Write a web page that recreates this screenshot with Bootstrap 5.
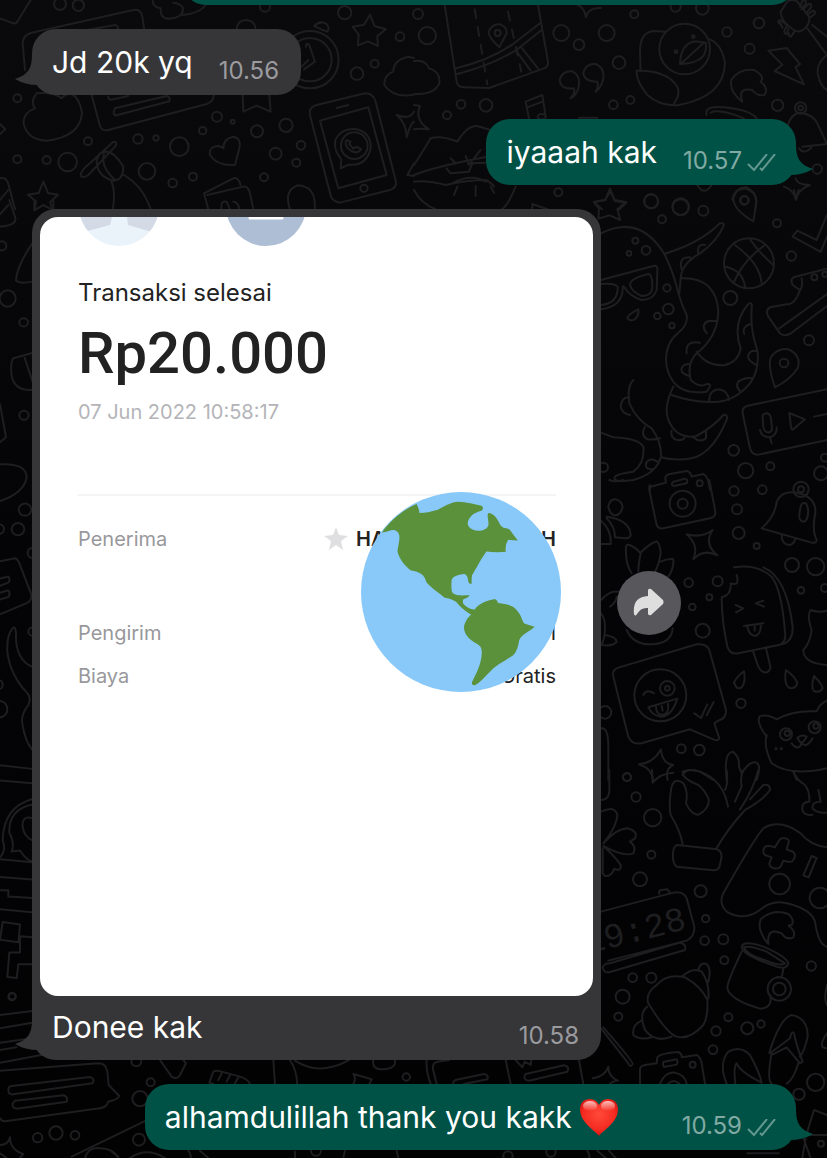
<!DOCTYPE html>
<html lang="id">
<head>
<meta charset="utf-8">
<meta name="viewport" content="width=device-width, initial-scale=1">
<title>Chat</title>
<link href="https://cdn.jsdelivr.net/npm/bootstrap@5.3.0/dist/css/bootstrap.min.css" rel="stylesheet">
<style>
body{background:#050507;font-family:Inter,"Liberation Sans",sans-serif}
.chat{min-height:100vh;padding:0 31px 8px 32px;gap:24px;background:linear-gradient(#0a0a0c,#040406 50%,#020203)}
.wallpaper{z-index:0;pointer-events:none}
.wallpaper g{fill:none;stroke:#1e1e20;stroke-width:2;stroke-linecap:round;stroke-linejoin:round}
.wallpaper g *{vector-effect:non-scaling-stroke}
.wallpaper .digits{fill:#1e1e20;stroke:none;font-family:"Liberation Mono",monospace}
.bubble{border-radius:24px;min-height:66px;padding:11px 20px 0;color:#fff;font-size:30px;line-height:44px}
.bubble-in{background:#363638;padding-right:22px}
.bubble-out{background:#005246}
.cut{height:5px;margin-bottom:0}
.cut .bubble{width:614px}
.stamp{font-size:24px;line-height:28px;color:#9b9b9f;padding-top:17px;margin-left:26px}
.bubble-out .stamp{color:#80aaa3}
.after-heart{margin-left:64px}
.tail{bottom:4px}
.bubble-in .tail{left:-18px}
.bubble-out .tail{right:-18px}
.photo-bubble{width:569px;padding:8px}
.photo{background:#fff;border-radius:18px;height:779px;color:#222;padding:0 37px 0 38px;line-height:30px}
.status{font-size:24px;margin-top:32px}
.amount{font:500 58px/72px Roboto,sans-serif;margin-top:9px}
.date{font-size:20px;color:#b4b4b8;margin-top:8px}
.rule{border-top:2px solid #f4f4f4;margin-top:67px}
.details{font-size:20px;margin-top:28px}
.details th{font-weight:400;color:#98989c}
.details td,.details th{padding:0;vertical-align:top}
.tall-row{height:94px}
.short-row{height:43px}
.masked{width:200px;font-weight:600}
.globe{left:321px;top:275px}
.caption-row{padding:9px 14px 0 12px;height:56px}
.forward{width:64px;height:64px;background:#58585c;margin-bottom:64px}
</style>
</head>
<body>
<main class="chat position-relative d-flex flex-column overflow-hidden">
<svg class="wallpaper position-absolute top-0 start-0 w-100 h-100" viewBox="0 0 827 1158" preserveAspectRatio="xMidYMin slice" aria-hidden="true">
<!-- top left -->
<g transform="scale(.3333)">
<path d="M0 55 40 70Q50 72 55 60L92 0M75 210 68 130Q68 105 95 98L400 30Q422 25 427 50L433 90M180 105 345 75Q356 76 354 90M458 0Q458 22 482 25Q480 55 505 56Q555 52 548 22Q540 10 520 8M548 45Q600 40 620 12M710 88Q712 60 740 60Q765 62 767 88M943 78Q960 60 980 72Q990 85 982 95Q960 88 943 78M275 285 300 378Q306 394 325 390L620 312Q642 304 641 285M325 290Q325 302 340 298L385 288M345 325 500 288Q512 290 508 304L350 346Q335 345 345 325M110 280Q90 305 105 325Q65 340 72 375Q85 420 140 422Q240 410 246 340Q240 295 215 282Q195 280 185 295Q160 275 110 280"/>
<path d="m1110 44 14 34 34 10-26 20 2 30-30-14-30 12 2-32-18-24 34-6zM728 285l2 50 40-18 42 18-4-50M1242 284Q1180 295 1153 255Q1152 225 1180 215Q1180 180 1225 170L1242 174M1242 335Q1230 360 1190 345Q1220 370 1220 412Q1232 370 1242 365M0 372 16 388 0 402"/>
<circle cx="930" cy="179" r="86"/><circle cx="930" cy="179" r="65"/><path d="M918 140Q918 125 928 135L945 185 912 208M925 180 905 200"/>
<path d="M930 345Q925 322 950 315L1095 280Q1120 280 1127 305L1188 545Q1190 565 1170 570L1020 608Q1000 606 993 590zM960 362 1105 322 1160 525 1015 565zM1010 324 1045 315"/>
<circle cx="1092" cy="565" r="11"/><circle cx="1063" cy="437" r="40"/><path d="M1022 505 1024 478Q1000 450 1006 420Q1025 382 1070 388Q1115 400 1112 445Q1100 500 1045 494zM1040 420Q1030 435 1050 450Q1070 465 1084 448L1070 440 1060 446 1048 432 1052 425z"/>
<path d="M705 495Q650 498 630 465Q625 440 655 438Q665 440 670 445Q670 415 700 410Q725 415 718 445zM340 425Q355 425 345 440L265 525Q240 540 243 520Q250 505 270 490zM300 460Q335 440 370 500Q370 540 340 542Q290 530 290 480zM312 462Q300 500 345 540M335 545Q348 580 338 628M372 525Q430 560 452 628M130 545l14 34 30 5-24 22 8 24M130 545l-14 34-32 5 24 20-4 26M0 535Q20 530 26 555L45 628M0 600 25 570M625 628 612 580 700 535Q715 530 722 555M622 585 730 560Q745 558 750 580L760 628M870 628Q850 570 895 556Q950 560 944 628M665 628Q660 600 680 605L690 628M700 605Q715 605 718 628M1242 490 1222 525 1242 528"/>
<circle cx="180" cy="12" r="18"/><circle cx="235" cy="16" r="17"/><circle cx="795" cy="20" r="15"/><circle cx="1034" cy="38" r="20"/><circle cx="1200" cy="110" r="13"/><circle cx="1124" cy="191" r="12"/><circle cx="1071" cy="221" r="19"/><circle cx="52" cy="295" r="12"/><circle cx="651" cy="350" r="15"/><circle cx="698" cy="365" r="6"/><circle cx="608" cy="392" r="11"/><circle cx="771" cy="394" r="18"/><circle cx="858" cy="376" r="20"/><circle cx="827" cy="461" r="18"/><circle cx="903" cy="436" r="13"/><circle cx="889" cy="488" r="12"/><circle cx="792" cy="532" r="12"/><circle cx="264" cy="424" r="12"/><circle cx="414" cy="417" r="14"/><circle cx="468" cy="414" r="8"/><circle cx="538" cy="440" r="28"/><circle cx="441" cy="514" r="25"/><circle cx="518" cy="549" r="13"/><circle cx="579" cy="530" r="12"/><circle cx="203" cy="486" r="28"/><circle cx="140" cy="480" r="12"/><circle cx="52" cy="478" r="12"/>
</g>
<!-- top right -->
<g transform="translate(414 0) scale(.3333)">
<path d="M92 15 128 245Q132 262 150 262L225 264 390 205Q404 200 402 185L372 15M126 205Q230 180 300 130L378 70M130 222Q235 195 310 148L380 92M305 150 350 212M320 140 372 205M256 142Q222 110 224 95Q235 70 258 73Q280 80 278 100zM490 15Q510 20 516 52Q522 22 560 24"/><path d="m182 28 38 225M282 35l40 180" stroke-dasharray="9 9"/><circle cx="251" cy="99" r="9"/>
<path d="M0 183Q35 178 45 205Q80 215 76 250Q60 285 0 282M470 295Q485 280 480 265Q440 270 437 240Q445 212 475 214Q500 225 494 260Q490 285 470 295zM545 275Q555 260 550 245Q510 245 508 218Q515 190 545 192Q575 205 567 240Q560 265 545 275zM680 212 678 150Q680 95 720 93L755 95M668 212Q665 240 700 285Q740 320 795 315Q930 290 933 190Q925 135 888 118M668 212Q760 210 790 260Q800 285 780 310M798 192Q800 130 845 124L875 128Q885 190 798 192M800 192 868 130"/>
<circle cx="812" cy="147" r="76"/><circle cx="838" cy="110" r="4"/><circle cx="786" cy="155" r="4"/>
<path d="M1063 152 1118 144 1158 192 1145 202 1170 253 1082 213 1105 194zM985 305Q945 275 952 240Q975 205 1020 210Q1055 230 1040 245Q1065 265 1052 285Q1030 290 1015 270Q970 260 985 305zM1100 35 1120 5Q1135-5 1150 5L1185 50Q1190 70 1170 88Q1155 100 1140 90Q1100 65 1100 35M1158 20l8-18q10-8 10 8l-14 18m6 0 16-16q12-2 6 12l-14 16m6 2 16-10q10 2 2 12l-14 10M1105 80l-12-14q0-8 10-4l16 14m-14 8-6-16m24 18-4 16q-8 2-8-10l8-14m24 14-12 18q-8-2-6-10M1180 85 1235 160M1195 75 1239 110M1239 165Q1205 190 1212 225Q1220 260 1239 270M345 355 335 305 385 285 395 350M340 322 388 304M878 345Q870 315 930 322Q1010 330 1028 355M890 338Q915 325 990 355M495 353 550 353"/>
<ellipse cx="383" cy="350" rx="12" ry="8"/>
<path d="M0 315 18 318M18 318Q0 360 45 388Q15 385 0 388M0 495Q20 465 50 415Q80 405 130 425Q160 375 190 378L230 390M0 525Q60 500 220 470M97 505 110 520 165 515 175 490 215 488M110 475 125 490M155 468 165 495 200 450M0 545Q40 540 95 555Q160 540 215 540Q235 550 240 560M0 570Q20 610 65 628M305 560Q285 610 265 628M130 560 120 585M185 558 185 588M230 560 240 578M115 550Q170 520 215 545"/>
<path d="m588 566 14 34 34 6-26 22M588 566l-14 34-34 6 24 22M355 628V612l45 16M850 555Q870 590 893 555M955 600Q960 566 992 566Q1030 575 1026 610L1024 628M1145 535Q1150 555 1188 555Q1150 570 1146 600Q1140 570 1110 560M1120 380Q1130 340 1160 338Q1200 345 1210 370L1239 432M1165 440 1239 432M1155 445Q1170 465 1192 443"/>
<circle cx="12" cy="42" r="15"/><circle cx="40" cy="107" r="26"/><circle cx="442" cy="99" r="24"/><circle cx="495" cy="134" r="16"/><circle cx="578" cy="99" r="24"/><circle cx="615" cy="188" r="19"/><circle cx="661" cy="43" r="12"/><circle cx="785" cy="20" r="15"/><circle cx="865" cy="25" r="19"/><circle cx="939" cy="96" r="14"/><circle cx="1035" cy="69" r="16"/><circle cx="1007" cy="146" r="15"/><circle cx="598" cy="314" r="13"/><circle cx="649" cy="300" r="12"/><circle cx="216" cy="316" r="19"/><circle cx="141" cy="313" r="13"/><circle cx="99" cy="346" r="12"/><circle cx="1091" cy="316" r="17"/><circle cx="1160" cy="324" r="17"/><circle cx="1160" cy="324" r="7"/><circle cx="1210" cy="507" r="14"/><circle cx="433" cy="577" r="12"/><circle cx="711" cy="604" r="21"/><circle cx="800" cy="622" r="24"/><circle cx="992" cy="601" r="12"/>
</g>
<!-- right, octopus and ball -->
<g transform="translate(590 190) scale(.3333)">
<path d="m61 5 14 28 34 5-26 24 8 28-32-14-34 10 2-30-16-20 34-6zM490 94Q430 60 430 25Q440-10 470-8Q505 10 498 45zM612 0 618 28 626 0M622 122 680 150 711 75M622 122 608 140 692 186 711 140M33 130Q150 70 225 195Q255 260 265 310Q275 345 290 375Q295 405 265 428Q220 465 230 530Q250 620 350 605Q370 580 350 582Q330 595 302 570Q290 520 320 490Q385 440 385 360Q375 260 272 265M222 192Q330 160 390 100Q405 98 400 110Q380 155 330 190Q275 220 272 265L268 310M320 485Q350 530 405 525Q445 515 452 475Q425 400 475 342Q488 335 485 355Q480 420 502 480Q510 540 480 580Q430 640 360 636Q300 635 245 615M250 590Q220 650 235 690Q260 750 320 738Q370 710 400 675Q415 672 410 690Q360 810 280 808Q240 810 215 802M130 570Q110 590 118 640Q140 690 185 715Q215 755 213 800Q200 850 130 870Q65 880 75 860Q85 850 130 845Q165 820 160 770Q145 745 70 742L33 728"/>
<path d="M33 270 190 228Q203 225 202 240L200 300Q190 330 155 330Q120 320 103 292Q98 285 98 295Q98 350 33 358M33 282Q75 278 83 290Q85 340 33 345M120 285Q120 265 175 252Q190 255 186 300Q180 318 155 318Q125 305 120 285M112 385Q115 372 145 358Q148 375 135 388Q118 395 112 385M275 238Q265 200 300 202L304 210M325 190Q320 160 345 165M350 430Q330 405 355 393L382 393M290 490Q285 450 330 458M298 558Q270 550 275 535Q280 522 298 522M463 432Q455 410 480 403M500 525Q470 510 475 495Q480 480 500 483M452 605Q435 590 445 575Q465 560 488 565M358 634Q355 600 390 598Q415 605 416 630M120 675Q95 670 92 650Q95 620 118 622M165 710Q150 735 172 748Q195 750 210 745M245 722Q240 745 262 750Q280 752 284 742M310 742Q330 760 348 745V725M185 837Q165 840 168 820Q180 800 202 815"/>
<circle cx="477" cy="220" r="75"/><path d="M435 165Q510 220 515 278M480 147Q500 180 550 225M430 280Q460 210 525 165M405 230Q460 240 465 292"/>
<path d="M711 236 610 262Q600 270 608 285L630 300Q640 290 635 265M630 300Q615 345 590 343L540 352Q525 360 535 380L570 430Q580 440 600 432L711 348M568 415 711 312M555 592Q530 520 545 498Q570 470 600 480Q635 500 623 535Q600 570 555 592M711 598 470 648Q455 655 458 670L480 775Q485 795 505 794L711 750M518 680Q515 672 530 670Q540 670 543 685L546 715Q545 728 532 727Q522 725 520 710zM510 720Q515 742 540 742Q562 735 560 712M540 742 545 760M598 670Q595 668 605 672L645 688 610 718Q605 722 603 710zM672 680 711 672M180 900Q180 888 190 888L228 878 226 865Q225 855 240 852L290 843Q300 843 305 860L340 852Q355 858 360 900M248 876 285 866Q295 868 290 880L252 888Q242 888 248 876"/>
<circle cx="184" cy="34" r="21"/><circle cx="272" cy="50" r="25"/><circle cx="340" cy="62" r="15"/><circle cx="216" cy="88" r="12"/><circle cx="463" cy="31" r="13"/><circle cx="561" cy="100" r="12"/><circle cx="604" cy="198" r="14"/><circle cx="136" cy="152" r="9"/><circle cx="168" cy="181" r="13"/><circle cx="117" cy="190" r="7"/><circle cx="231" cy="294" r="11"/><circle cx="235" cy="357" r="16"/><circle cx="202" cy="378" r="10"/><circle cx="246" cy="407" r="8"/><circle cx="421" cy="324" r="21"/><circle cx="657" cy="451" r="15"/><circle cx="582" cy="519" r="13"/><circle cx="673" cy="262" r="9"/><circle cx="705" cy="253" r="8"/><circle cx="431" cy="781" r="16"/><circle cx="467" cy="842" r="23"/><circle cx="541" cy="829" r="12"/><circle cx="693" cy="850" r="21"/><circle cx="705" cy="803" r="12"/><circle cx="329" cy="880" r="9"/><circle cx="40" cy="832" r="14"/>
</g>
<!-- right, camera to pug -->
<g transform="translate(590 480) scale(.3333)">
<path d="M180 15Q175 20 180 40L200 135Q205 147 220 145L360 115Q378 110 376 95L358 0M515 145Q555 110 560 65Q575 30 620 38Q680 50 676 100Q665 150 680 180Q680 190 665 188zM632 80Q635 65 648 70Q660 90 650 118Q640 132 630 118Q625 110 632 80M575 165Q575 195 600 195Q615 190 615 175M55 80Q60 55 78 58Q100 65 97 85Q88 110 70 105Q58 98 55 80M50 110Q120 120 122 165Q120 175 105 175L75 172Q75 140 50 115M33 122Q65 150 62 192H33M125 280Q105 250 108 200Q110 190 125 198Q140 205 152 220Q145 255 145 275M152 218Q180 190 200 184Q210 190 212 220Q205 260 195 275M212 245Q235 235 250 238Q252 265 235 290M110 450Q130 495 185 493Q245 490 248 445M33 360Q60 330 85 335M60 380Q80 365 80 350M33 400Q45 415 45 440Q45 480 33 495M45 465Q78 470 80 485Q70 500 33 495"/>
<circle cx="278" cy="71" r="39"/><circle cx="278" cy="71" r="15"/><path d="M290 163Q335 175 368 150Q340 190 382 226Q340 205 310 238Q328 195 290 163"/>
<path d="M432 262Q500 250 545 290Q575 330 585 455Q590 485 570 494L445 520Q420 525 412 500Q395 420 395 352Q425 345 422 310Q450 320 440 285M520 262Q590 290 608 440Q610 485 575 493M490 516 505 560Q515 580 530 577Q545 570 540 555L528 505M437 375 460 385 438 397M520 362 497 370 522 380M462 438 520 430M472 438Q475 465 495 468Q515 462 512 432M494 435V452M711 392Q690 400 662 390Q650 405 665 450Q660 490 640 510Q640 550 711 555M432 608Q440 590 462 574Q468 605 455 622Q440 632 432 608M588 570Q615 590 622 608Q620 625 600 625Q580 615 588 570M672 588Q695 610 698 625Q690 640 672 633Q662 625 672 588"/>
<path d="M70 590Q65 570 85 563L320 493Q350 490 358 510L408 690Q410 715 385 722L373 730 388 775Q385 785 370 778L300 748 155 790Q125 795 115 770zM160 645Q170 625 192 640M175 682 262 656Q245 710 212 710Q185 705 175 682M198 680Q198 705 220 704Q238 700 234 672M215 678 218 692M313 700 333 714 352 673M350 706 371 666"/>
<circle cx="211" cy="646" r="78"/><circle cx="232" cy="625" r="22"/><circle cx="232" cy="625" r="7"/>
<path d="M530 770Q500 730 508 710Q530 700 560 718Q610 690 680 694Q690 670 711 662M530 765Q520 800 545 850Q600 890 711 865M605 790Q625 815 635 790Q650 805 668 775M622 774Q635 762 650 770Q640 788 632 788zM610 875 620 900M147 853Q190 850 213 808Q215 850 250 855Q225 865 233 900M147 853Q185 865 190 900M278 885Q290 862 330 875L370 900M410 900Q400 820 428 815Q450 830 447 860L455 880Q480 840 500 848Q515 860 500 900M33 745Q55 740 55 800V900M58 0Q75 8 100 0"/>
<circle cx="588" cy="763" r="18"/><circle cx="592" cy="760" r="8"/><circle cx="674" cy="742" r="18"/><circle cx="678" cy="738" r="8"/><circle cx="558" cy="806" r="2"/><circle cx="574" cy="806" r="2"/>
<circle cx="432" cy="33" r="14"/><circle cx="517" cy="29" r="13"/><circle cx="441" cy="88" r="15"/><circle cx="446" cy="159" r="18"/><circle cx="500" cy="198" r="9"/><circle cx="633" cy="28" r="23"/><circle cx="633" cy="28" r="9"/><circle cx="606" cy="255" r="21"/><circle cx="677" cy="260" r="26"/><circle cx="633" cy="331" r="10"/><circle cx="705" cy="324" r="12"/><circle cx="296" cy="308" r="13"/><circle cx="383" cy="304" r="15"/><circle cx="358" cy="352" r="9"/><circle cx="307" cy="381" r="10"/><circle cx="338" cy="452" r="21"/><circle cx="453" cy="670" r="14"/><circle cx="45" cy="697" r="19"/><circle cx="274" cy="806" r="13"/><circle cx="328" cy="810" r="16"/><circle cx="111" cy="891" r="12"/>
</g>
<!-- right, glove to croissant -->
<g transform="translate(590 770) scale(.3333)">
<path d="M278 222Q270 180 242 135Q235 100 245 50Q255 20 280 40Q295 65 288 100Q305 135 325 134Q355 120 357 90Q345 60 325 45Q275 25 278 5Q300-5 330 5Q400 30 414 110M410 0Q415 40 405 60M460 0Q450 20 455 50L435 95M505 0Q490 60 450 118M480 88 520 45Q540 40 540 60Q520 90 465 120Q410 180 378 238M262 225 382 238Q397 245 394 265L388 292Q382 302 370 301L260 290Q245 280 250 240Q255 225 262 225M610 5Q620 30 645 45Q660 65 658 95Q635 95 637 118Q640 138 668 134M685 60 692 95Q665 95 668 115Q680 130 711 128M186 0 188 38Q210 10 250 8M33 125Q75 105 82 135Q80 170 40 220Q80 175 115 175Q145 185 135 205L120 215Q140 230 130 250Q100 262 40 228Q80 265 92 285Q95 305 72 297Q65 320 45 318L38 310V235M33 90Q55 90 58 65V0"/>
<path d="M711 232Q660 225 632 190Q570 145 520 175Q490 210 400 370Q385 400 410 425Q460 455 510 420Q550 385 600 402Q665 420 675 455Q685 525 711 530M555 232 568 210Q575 200 590 206Q600 210 595 220L590 238 610 246Q620 255 610 270Q605 278 595 275L580 272 572 290Q560 300 545 292Q535 288 540 275L545 262 525 255Q515 245 525 230Q535 225 555 232M640 316 665 258 680 264 656 322zM535 522Q500 480 512 448Q550 415 595 432Q615 450 605 465Q590 465 600 470Q618 485 610 502Q590 512 575 490Q530 470 535 522M33 425 250 368Q280 362 290 385L313 470Q315 500 290 512L55 572M60 580 270 518Q290 522 285 540L60 606Q40 610 38 592Q42 580 60 580M208 372Q205 360 215 360L232 358 240 368"/>
<path d="M455 545Q410 640 412 655Q420 690 510 716Q540 715 542 690V680M455 530Q460 510 520 530Q590 560 595 580Q590 600 560 590Q455 555 455 530M462 532Q480 525 530 545L585 580Q570 590 530 572Q470 555 462 532M580 598 575 622H560M540 675 545 685"/><circle cx="568" cy="657" r="35"/><circle cx="568" cy="657" r="19"/>
<path d="M175 700Q165 670 200 645Q230 610 285 622Q335 650 352 690Q355 740 340 765Q300 810 260 800Q230 790 175 700M172 710Q145 730 165 780Q195 820 245 800M155 752Q125 765 130 795Q150 812 185 802M278 618Q310 590 335 605Q360 640 355 685M325 600Q330 575 350 582Q365 600 355 635M33 775 115 880Q120 895 128 882Q130 875 40 772M8 925Q45 920 55 890Q55 920 84 932Q65 935 60 941M150 941V898Q150 888 165 885L200 880 202 862Q210 850 265 846Q275 850 276 862L320 855Q330 860 335 880L345 941M220 876 260 868Q265 875 260 884L222 891Q217 885 220 876M210 941Q225 905 255 908Q285 915 290 941M235 941Q250 925 268 941M410 941Q385 880 415 845Q450 825 480 855Q510 910 515 938M436 941Q430 890 440 880Q450 905 515 938M538 848Q570 745 605 735Q655 745 653 800Q645 840 630 860M540 850 600 805Q605 780 612 790Q620 830 638 875L630 880 590 832 545 855M545 850Q530 930 545 941M625 880Q610 930 590 941M711 645Q700 690 711 705M711 790Q680 835 711 835"/>
<circle cx="111" cy="22" r="12"/><circle cx="138" cy="81" r="14"/><circle cx="188" cy="143" r="26"/><circle cx="184" cy="254" r="12"/><circle cx="150" cy="328" r="21"/><circle cx="332" cy="364" r="18"/><circle cx="347" cy="446" r="11"/><circle cx="344" cy="512" r="13"/><circle cx="400" cy="508" r="15"/><circle cx="403" cy="571" r="12"/><circle cx="569" cy="342" r="31"/><circle cx="690" cy="384" r="31"/><circle cx="664" cy="588" r="14"/><circle cx="128" cy="623" r="13"/><circle cx="184" cy="623" r="15"/><circle cx="98" cy="680" r="21"/><circle cx="85" cy="740" r="12"/><circle cx="415" cy="742" r="12"/><circle cx="472" cy="775" r="18"/><circle cx="513" cy="762" r="11"/><circle cx="378" cy="783" r="14"/><circle cx="369" cy="839" r="13"/><circle cx="308" cy="884" r="9"/><circle cx="677" cy="937" r="26"/>
<text class="digits" font-size="104" transform="translate(-10 552) rotate(-14)">19:28</text>
</g>
<!-- left edge -->
<g transform="translate(0 200) scale(.3333 .5102)">
<path d="M0 52Q50 50 46 35L28 0M0 28 25 10M103 20V0M103 20 130 10 160 20V0M97 85Q50 130 48 158Q60 165 97 160M97 300 40 310Q30 320 35 345Q45 375 97 372M72 305 97 355M0 400 18 465 0 475M0 518Q80 515 80 545Q70 575 0 590M0 708 45 702Q55 705 60 715L95 775Q95 785 80 790L0 812M0 742 25 738Q32 745 25 750L0 756M0 770 25 765Q32 772 25 778L0 783M97 915Q45 900 48 850Q45 830 35 842Q20 855 22 885Q30 930 80 965Q95 975 85 990Q60 1010 68 1030Q75 1060 97 1078M0 1108 97 1115M0 1138 97 1143M0 1288Q20 1275 8 1255Q10 1190 97 1174M97 1185Q25 1195 28 1240Q45 1260 35 1277L60 1275Q80 1295 97 1296M97 1212Q65 1205 68 1230Q75 1250 97 1255M0 1292 97 1298M0 1327 97 1332M0 1353H25V1365L97 1368M0 1390 97 1396M8 1415 60 1420 55 1455 0 1450zM97 1445 60 1443V1475H28L22 1523 50 1525 55 1498H97"/>
<ellipse cx="6" cy="90" rx="13" ry="9"/><ellipse cx="23" cy="193" rx="24" ry="16"/><ellipse cx="71" cy="240" rx="13" ry="8"/><ellipse cx="72" cy="422" rx="14" ry="9"/><ellipse cx="75" cy="607" rx="19" ry="12"/><ellipse cx="54" cy="645" rx="19" ry="12"/><ellipse cx="0" cy="645" rx="12" ry="9"/><ellipse cx="97" cy="692" rx="14" ry="10"/><ellipse cx="97" cy="846" rx="12" ry="8"/><ellipse cx="0" cy="950" rx="8" ry="8"/><ellipse cx="0" cy="998" rx="22" ry="16"/><ellipse cx="37" cy="1561" rx="10" ry="6"/>
</g>
<!-- bottom left -->
<g transform="translate(0 980) scale(.3333)">
<path d="M0 105 97 93M0 145 97 128M0 188 75 178M0 210 50 202M0 248 140 222M0 272 295 250Q318 250 322 275L326 315 358 348Q355 358 325 365Q320 382 300 385L15 424Q5 425 0 415M35 318 270 291Q285 295 278 310L40 343Q25 345 25 330Q26 318 35 318M45 362 190 346Q205 350 200 365L50 386Q35 385 38 370zM480 240 515 290Q530 300 540 285L558 250 550 240M640 312 628 308 640 275Q650 270 665 275L720 290Q745 298 750 312M665 280 655 300M690 285 680 305M715 292 705 310M820 240 825 312M870 240Q890 270 892 312M885 242Q960 290 1048 240M1120 240Q1115 270 1150 268Q1190 265 1185 240M1060 312Q1070 295 1060 282Q1090 290 1115 298L1108 312M215 530 445 418M0 495Q25 495 30 472Q30 510 70 522L60 534M0 520 20 534M255 534Q265 500 300 505Q340 505 355 534M335 515 355 530M390 534Q440 500 495 534M565 512Q575 525 572 534M600 512 625 534M885 515V534M1035 512 1030 534M1190 512 1195 534"/>
<circle cx="36" cy="50" r="11"/><circle cx="409" cy="244" r="15"/><circle cx="452" cy="307" r="12"/><circle cx="420" cy="356" r="23"/><circle cx="417" cy="479" r="18"/><circle cx="113" cy="473" r="14"/><circle cx="168" cy="459" r="20"/><circle cx="225" cy="466" r="13"/><circle cx="948" cy="512" r="15"/><circle cx="1219" cy="291" r="11"/>
</g>
<!-- bottom right -->
<g transform="translate(414 980) scale(.3333)">
<path d="M38 240Q35 270 50 312M105 240 70 245Q50 250 60 280L68 312M118 312Q115 300 135 298L210 282Q225 285 220 298L150 312M275 240 290 312M495 240 508 312M305 240 325 262 332 245 350 255 352 240M335 282 450 256Q468 260 460 275L345 302Q325 300 335 282M1190 534 1165 465H1239M1180 455 1200 390 1239 405M520 512Q530 530 525 534M550 512 575 534M585 512 605 534M1000 520H1095M1165 534 1175 475"/>
<circle cx="1155" cy="343" r="17"/><circle cx="1221" cy="491" r="9"/><circle cx="282" cy="528" r="14"/><circle cx="411" cy="516" r="14"/>
</g>
</svg>

<div class="cut d-flex justify-content-end align-items-end overflow-hidden position-relative"><div class="bubble bubble-out"></div></div>

<article class="bubble bubble-in position-relative d-flex align-self-start">
<svg class="tail position-absolute" width="24" height="36" viewBox="0 0 24 36" aria-hidden="true"><path d="M18 0C18 13 14 20 1 24Q11 30 24 30V0z" fill="#363638"/></svg>
<span>Jd 20k yq</span><time class="stamp">10.56</time>
</article>

<article class="bubble bubble-out position-relative d-flex align-self-end">
<span>iyaaah kak</span><time class="stamp">10.57</time>
<svg class="flex-shrink-0 mt-4 ms-1" width="30" height="20" viewBox="0 0 30 20" fill="none" stroke="#63978f" stroke-width="2" aria-label="Terkirim"><path d="m2 10 6 6L21 0M14 14l2 2L29 0"/></svg>
<svg class="tail position-absolute" width="24" height="36" viewBox="0 0 24 36" aria-hidden="true"><path d="M6 0C6 13 10 20 23 24Q13 30 0 30V0z" fill="#005246"/></svg>
</article>

<div class="d-flex align-items-center gap-3 position-relative">
<article class="bubble bubble-in photo-bubble position-relative">
<svg class="tail position-absolute" width="24" height="36" viewBox="0 0 24 36" aria-hidden="true"><path d="M18 0C18 13 14 20 1 24Q11 30 24 30V0z" fill="#363638"/></svg>
<section class="photo position-relative overflow-hidden">
<svg class="d-block" width="240" height="29" viewBox="0 0 240 29" aria-hidden="true"><defs><clipPath id="avatar"><circle cx="41" cy="-11" r="40"/></clipPath></defs><g clip-path="url(#avatar)"><path fill="#eaf3fa" d="M0-60h90V29H0z"/><path fill="#d3dae6" d="M0 0h34L32 8 6 15zM49 0h34L74 15 50 8z"/></g><circle cx="188" cy="-11" r="40" fill="#aebed5"/><path d="M172 1h32" stroke="#fff" stroke-width="3" stroke-linecap="round"/></svg>
<div class="status">Transaksi selesai</div>
<div class="amount">Rp20.000</div>
<div class="date">07 Jun 2022 10:58:17</div>
<div class="rule"></div>
<table class="details w-100">
<tr class="tall-row"><th scope="row">Penerima</th><td><div class="d-flex justify-content-end align-items-center gap-2"><svg width="24" height="24" viewBox="0 0 24 24" fill="#dfdfe1" aria-hidden="true"><path d="m12 0 3 8 9 1-7 5 2 9-7-5-7 5 2-9-7-5 9-1z"/></svg><div class="masked d-flex justify-content-between"><span>HA</span><span>H</span></div></div></td></tr>
<tr class="short-row"><th scope="row">Pengirim</th><td class="text-end">I</td></tr>
<tr class="short-row"><th scope="row">Biaya</th><td class="text-end">Gratis</td></tr>
</table>
<svg class="globe position-absolute" width="200" height="200" viewBox="155 37 598 598" role="img" aria-label="Globe"><circle cx="454" cy="336" r="299" fill="#88c9f9"/><path fill="#5c913b" d="M218 158C240 125 280 90 321 73Q328 85 330 100C345 100 365 96 385 90C410 75 430 66 445 66C470 67 495 73 515 78Q523 83 517 92C490 98 474 115 474 132C476 148 495 153 510 153C528 152 538 140 536 130C536 118 530 105 537 100C550 100 562 115 571 135C580 148 590 143 600 150Q610 165 624 182Q613 182 595 180Q585 195 588 216Q555 218 530 215C515 235 500 265 487 286Q485 300 486 311Q477 314 475 300Q474 285 464 282C445 284 428 290 426 300C425 315 424 335 430 340C440 348 455 346 479 346Q480 350 461 358Q456 370 466 376Q480 388 495 388C505 372 530 362 555 357Q563 360 565 369C590 372 610 376 620 390C635 405 635 420 643 430Q660 435 674 440C660 455 635 462 628 480C625 500 620 515 610 525C580 545 560 555 545 570C525 590 510 608 495 615Q484 616 487 605C500 580 515 550 516 520Q518 498 500 490C478 478 462 460 463 440Q466 420 484 404C470 395 455 385 440 366Q425 355 405 353C385 335 360 320 350 305C345 285 330 275 305 272C290 262 270 240 264 215C265 195 278 165 262 154C250 145 235 158 218 158z"/></svg>
</section>
<div class="caption-row d-flex justify-content-between"><span>Donee kak</span><time class="stamp">10.58</time></div>
</article>
<button class="forward btn rounded-circle p-0 border-0 flex-shrink-0" type="button" aria-label="Teruskan"><svg width="32" height="30" viewBox="0 0 32 30" fill="#dededf" aria-hidden="true"><path d="M15 2Q16 0 18 1L30 12Q31 14 30 16L18 27Q16 28 15 26V20Q8 19 4 26Q2 29 1 26Q-1 9 15 8z"/></svg></button>
</div>

<article class="bubble bubble-out position-relative d-flex align-self-end">
<span>alhamdulillah thank you kakk</span>
<svg class="flex-shrink-0 mt-1 ms-2" width="38" height="38" viewBox="0 0 38 38" role="img" aria-label="Hati"><defs><radialGradient id="red" cx=".5" cy=".42" r=".6"><stop offset="0" stop-color="#ff4a3a"/><stop offset=".7" stop-color="#f52a20"/><stop offset="1" stop-color="#cf100e"/></radialGradient><linearGradient id="shine" x2="0" y2="1"><stop stop-color="#fff" stop-opacity=".7"/><stop offset="1" stop-color="#fff" stop-opacity="0"/></linearGradient></defs><path fill="url(#red)" d="M19 37C15 31 0 24 0 10C0 4 4 0 10 0Q16 0 19 6Q22 0 28 0C34 0 38 4 38 10C38 24 23 31 19 37z"/><ellipse cx="10" cy="7" rx="7" ry="5" fill="url(#shine)"/><ellipse cx="28" cy="7" rx="7" ry="5" fill="url(#shine)"/></svg>
<time class="stamp after-heart">10.59</time>
<svg class="flex-shrink-0 mt-4 ms-1" width="30" height="20" viewBox="0 0 30 20" fill="none" stroke="#63978f" stroke-width="2" aria-label="Terkirim"><path d="m2 10 6 6L21 0M14 14l2 2L29 0"/></svg>
<svg class="tail position-absolute" width="24" height="36" viewBox="0 0 24 36" aria-hidden="true"><path d="M6 0C6 13 10 20 23 24Q13 30 0 30V0z" fill="#005246"/></svg>
</article>
</main>
<script src="https://cdn.jsdelivr.net/npm/bootstrap@5.3.0/dist/js/bootstrap.bundle.min.js"></script>
</body>
</html>
